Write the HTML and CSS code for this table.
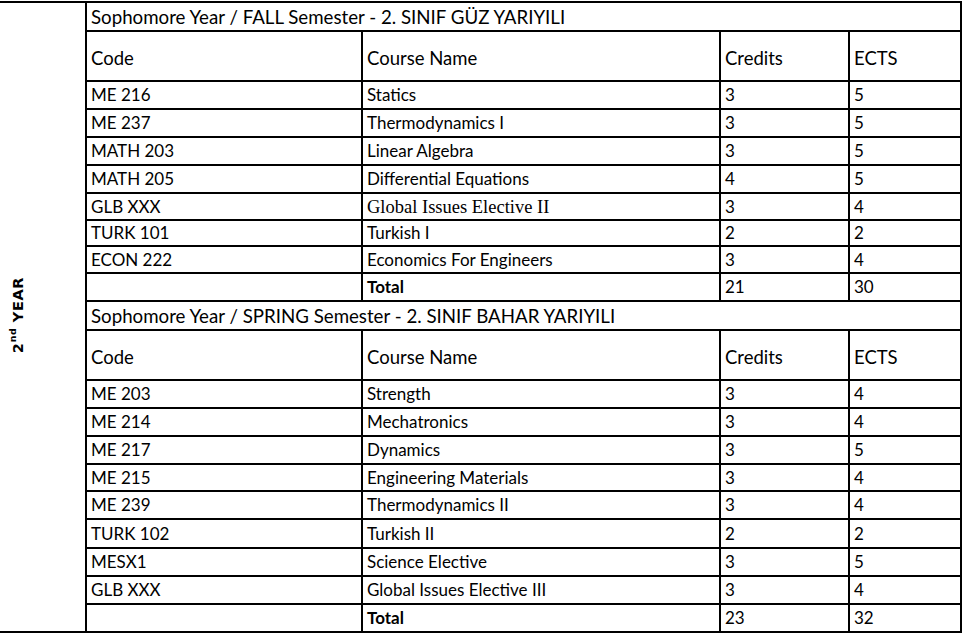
FILE: index.html
```html
<!DOCTYPE html>
<html lang="en">
<head>
<meta charset="utf-8">
<title>2nd Year Curriculum</title>
<link rel="stylesheet" href="styles.css">
</head>
<body>
<table class="plan">
  <colgroup>
    <col class="c-year">
    <col class="c-code">
    <col class="c-name">
    <col class="c-cred">
    <col class="c-ects">
  </colgroup>
  <tbody>
    <tr class="sem">
      <td class="year" rowspan="21"><span class="year-label">2<sup>nd</sup> YEAR</span></td>
      <td colspan="4">Sophomore Year / FALL Semester - 2. SINIF GÜZ YARIYILI</td>
    </tr>
    <tr class="head"><td>Code</td><td>Course Name</td><td>Credits</td><td>ECTS</td></tr>
    <tr class="row"><td>ME 216</td><td>Statics</td><td>3</td><td>5</td></tr>
    <tr class="row"><td>ME 237</td><td>Thermodynamics I</td><td>3</td><td>5</td></tr>
    <tr class="row"><td>MATH 203</td><td>Linear Algebra</td><td>3</td><td>5</td></tr>
    <tr class="row"><td>MATH 205</td><td>Differential Equations</td><td>4</td><td>5</td></tr>
    <tr class="row r27"><td>GLB XXX</td><td class="serif">Global Issues Elective II</td><td>3</td><td>4</td></tr>
    <tr class="row r26"><td>TURK 101</td><td>Turkish I</td><td>2</td><td>2</td></tr>
    <tr class="row r27"><td>ECON 222</td><td>Economics For Engineers</td><td>3</td><td>4</td></tr>
    <tr class="row total"><td></td><td>Total</td><td>21</td><td>30</td></tr>
    <tr class="sem"><td colspan="4">Sophomore Year / SPRING Semester - 2. SINIF BAHAR YARIYILI</td></tr>
    <tr class="head"><td>Code</td><td>Course Name</td><td>Credits</td><td>ECTS</td></tr>
    <tr class="row"><td>ME 203</td><td>Strength</td><td>3</td><td>4</td></tr>
    <tr class="row"><td>ME 214</td><td>Mechatronics</td><td>3</td><td>4</td></tr>
    <tr class="row"><td>ME 217</td><td>Dynamics</td><td>3</td><td>5</td></tr>
    <tr class="row r27"><td>ME 215</td><td>Engineering Materials</td><td>3</td><td>4</td></tr>
    <tr class="row"><td>ME 239</td><td>Thermodynamics II</td><td>3</td><td>4</td></tr>
    <tr class="row r29"><td>TURK 102</td><td>Turkish II</td><td>2</td><td>2</td></tr>
    <tr class="row"><td>MESX1</td><td>Science Elective</td><td>3</td><td>5</td></tr>
    <tr class="row"><td>GLB XXX</td><td>Global Issues Elective III</td><td>3</td><td>4</td></tr>
    <tr class="row total"><td></td><td>Total</td><td>23</td><td>32</td></tr>
  </tbody>
</table>
</body>
</html>
```
FILE: styles.css
```css
html, body {
  margin: 0;
  padding: 0;
  background: #fff;
}

body {
  font-family: "Lato", "Noto Sans", sans-serif;
  color: #000;
}

.plan {
  border-collapse: collapse;
  table-layout: fixed;
  width: 961px;
  margin-top: 1px;
  font-size: 17px;
}

.c-year { width: 86px; }
.c-code { width: 276px; }
.c-name { width: 358px; }
.c-cred { width: 129px; }
.c-ects { width: 112px; }

.plan td {
  border: 2px solid #000;
  padding: 0 3px 0 4px;
  vertical-align: middle;
  white-space: nowrap;
  line-height: 20px;
  overflow: hidden;
}

.plan td.year {
  border-left: none;
  padding: 0 0 0 8px;
  text-align: left;
}

.year-label {
  display: inline-block;
  writing-mode: vertical-rl;
  transform: rotate(180deg);
  font-family: "DejaVu Sans", sans-serif;
  font-weight: bold;
  font-size: 14.5px;
  letter-spacing: 0.6px;
  line-height: 20px;
}

.year-label sup {
  font-size: 9.5px;
  vertical-align: 5px;
  line-height: 0;
  margin-right: 3px;
}

.sem td {
  height: 27px;
  font-size: 18.7px;
}
.head td {
  height: 44px;
  padding-top: 4px;
  font-size: 18.5px;
}
.row td { height: 26px; }
.row.r27 td { height: 25px; }
.row.r26 td { height: 24px; }
.row.r29 td { height: 27px; }

.total td:nth-child(2) { font-weight: bold; }
.total td:nth-child(2):first-child { font-weight: normal; }

.serif {
  font-family: "Liberation Serif", "DejaVu Serif", serif;
  font-size: 18.5px;
}
```
